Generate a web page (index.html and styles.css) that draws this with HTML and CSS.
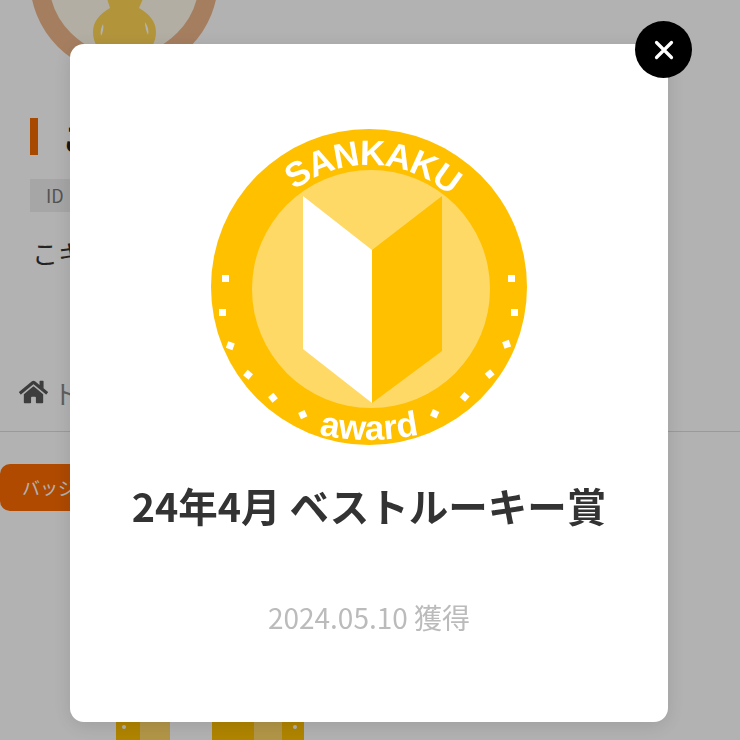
FILE: index.html
```html
<!DOCTYPE html>
<html lang="ja">
<head>
  <meta charset="UTF-8">
  <title>Badge</title>
  <link rel="stylesheet" href="styles.css">
</head>
<body>

<div class="page">
  <svg class="avatar" width="188" height="188" viewBox="0 0 188 188">
    <circle cx="94" cy="94" r="84.5" fill="#fffaea" stroke="#edb589" stroke-width="19"/>
    <path d="M75 106L80 122C70 128 63 135 63 146C63 155 68 165 75 172H114C121 165 126 155 126 146C126 135 119 128 109 122L116 106Z" fill="#ffd555"/>
    <path d="M73 138C71 142 70 146 71 150C73 146 74 142 73 138Z" fill="#fff"/>
    <path d="M115 136C118 140 119 145 118 149C116 145 115 140 115 136Z" fill="#fff"/>
  </svg>

  <div class="title-row">
    <span class="title-bar"></span>
    <h1>こんにちは</h1>
  </div>
  <div class="id-tag">ID</div>
  <p class="intro">こキャラ</p>

  <nav class="crumbs">
    <svg class="home-icon" viewBox="0 0 576 512" width="29" height="26">
      <path d="M280.37 148.26L96 300.11V464a16 16 0 0 0 16 16l112.06-.29a16 16 0 0 0 15.92-16V368a16 16 0 0 1 16-16h64a16 16 0 0 1 16 16v95.64a16 16 0 0 0 16 16.05L464 480a16 16 0 0 0 16-16V300L295.67 148.26a12.19 12.19 0 0 0-15.3 0zM571.6 251.47L488 182.56V44.05a12 12 0 0 0-12-12h-56a12 12 0 0 0-12 12v72.61L318.47 43a48 48 0 0 0-61 0L4.34 251.47a12 12 0 0 0-1.6 16.9l25.5 31A12 12 0 0 0 45.15 301l235.22-193.74a12.19 12.19 0 0 1 15.3 0L530.9 301a12 12 0 0 0 16.9-1.6l25.5-31a12 12 0 0 0-1.7-16.93z"/>
    </svg>
    <span>トップ</span>
  </nav>

  <div class="tabs">
    <a class="tab-active">バッジ一覧</a>
  </div>

  <div class="ribbons">
    <div class="ribbon ribbon-a">
      <span class="strip-dark"><i class="pin"></i></span>
      <span class="strip-light"></span>
    </div>
    <div class="ribbon ribbon-b">
      <span class="strip-dark strip-wide"></span>
      <span class="strip-light strip-mid"></span>
      <span class="strip-dark"><i class="pin"></i></span>
    </div>
  </div>
</div>

<div class="overlay"></div>

<div class="modal">
  <button class="close-button" aria-label="close">
    <svg viewBox="0 0 20 20" width="20" height="20">
      <path d="M2.5 2.5L17.5 17.5M17.5 2.5L2.5 17.5" stroke="#fff" stroke-width="3.2" stroke-linecap="round"/>
    </svg>
  </button>

  <svg class="badge" width="340" height="340" viewBox="200 120 340 340">
    <defs>
      <path id="arc-top" d="M247 287a122 122 0 0 1 244 0"/>
      <path id="arc-bottom" d="M269 418A240 240 0 0 0 469 418"/>
    </defs>
    <circle cx="369" cy="287" r="158" fill="#ffc000"/>
    <circle cx="371" cy="289" r="119" fill="#ffd966"/>
    <polygon points="303,196 372,250 372,403 303,349" fill="#fff"/>
    <polygon points="442,196 372,250 372,403 442,351" fill="#ffc000"/>
    <text class="badge-top"><textPath href="#arc-top" startOffset="51%" text-anchor="middle">SANKAKU</textPath></text>
    <text class="badge-bottom"><textPath href="#arc-bottom" startOffset="50%" text-anchor="middle">award</textPath></text>
    <g fill="#fff">
      <rect x="222" y="275" width="7" height="7"/>
      <rect x="219" y="309" width="7" height="7"/>
      <rect x="227" y="342" width="7" height="7" transform="rotate(20 230 345)"/>
      <rect x="245" y="371" width="7" height="7" transform="rotate(40 248 374)"/>
      <rect x="270" y="394" width="7" height="7" transform="rotate(50 273 397)"/>
      <rect x="300" y="411" width="7" height="7" transform="rotate(65 303 414)"/>
      <rect x="508" y="275" width="7" height="7"/>
      <rect x="511" y="309" width="7" height="7"/>
      <rect x="503" y="341" width="7" height="7" transform="rotate(-20 506 344)"/>
      <rect x="486" y="371" width="7" height="7" transform="rotate(-40 489 374)"/>
      <rect x="461" y="394" width="7" height="7" transform="rotate(-50 464 397)"/>
      <rect x="431" y="411" width="7" height="7" transform="rotate(-65 434 414)"/>
    </g>
  </svg>

  <h2 class="badge-name">24年4月 ベストルーキー賞</h2>
  <p class="badge-date">2024.05.10 獲得</p>
</div>

</body>
</html>
```

FILE: styles.css
```css
html, body {
  height: 740px;
  overflow: hidden;
}

body {
  margin: 0;
  background-color: #fff;
  font-family: "Noto Sans CJK JP", "Noto Sans", sans-serif;
}

.page {
  margin-top: -114px;
}

.avatar {
  display: block;
  margin-left: 30px;
}

.title-row {
  display: flex;
  align-items: center;
  gap: 24px;
  margin: 44px 0 0 30px;
  height: 37px;
}

.title-bar {
  width: 8px;
  height: 37px;
  background-color: #f06a00;
}

.title-row h1 {
  margin: 0;
  font-size: 32px;
  color: #222;
  white-space: nowrap;
}

.id-tag {
  width: 120px;
  height: 33px;
  margin: 24px 0 0 30px;
  padding-left: 16px;
  background-color: #eee;
  color: #777;
  font-size: 18px;
  line-height: 33px;
}

.intro {
  margin: 22px 0 0 32px;
  font-size: 26px;
  line-height: 38px;
  color: #333;
}

.crumbs {
  display: flex;
  align-items: center;
  gap: 5px;
  height: 34px;
  margin-top: 103px;
  padding: 0 0 22px 19px;
  color: #888;
  font-size: 26px;
  border-bottom: 1px solid #ddd;
}

.home-icon {
  fill: #585858;
}

.tabs {
  margin-top: 32px;
}

.tab-active {
  display: block;
  width: 200px;
  height: 47px;
  padding-left: 22px;
  border-radius: 10px;
  background-color: #fb6a00;
  color: #fff;
  font-size: 18px;
  line-height: 47px;
}

.ribbons {
  display: flex;
  gap: 42px;
  margin: 190px 0 0 116px;
}

.ribbon {
  display: flex;
  height: 39px;
}

.ribbon span {
  display: block;
  position: relative;
  width: 22px;
}

.strip-dark {
  background-color: #fcbe00;
}

.strip-light {
  background-color: #ffd766;
}

.ribbon-a span.strip-dark {
  width: 24px;
}

.ribbon-a span.strip-light {
  width: 30px;
}

.ribbon span.strip-wide {
  width: 42px;
}

.ribbon span.strip-mid {
  width: 28px;
}

.pin {
  position: absolute;
  top: 24px;
  left: 6px;
  width: 4px;
  height: 4px;
  border-radius: 50%;
  background-color: #fff;
}

.ribbon-b .pin {
  left: 11px;
}

.overlay {
  position: fixed;
  inset: 0;
  background-color: rgba(0, 0, 0, 0.3);
}

.modal {
  position: fixed;
  left: 70px;
  top: 44px;
  width: 598px;
  height: 678px;
  border-radius: 14px;
  background-color: #fff;
  box-shadow: 0 4px 20px rgba(0, 0, 0, 0.12);
  display: flex;
  flex-direction: column;
  align-items: center;
}

.close-button {
  position: absolute;
  top: -23px;
  right: -24px;
  display: flex;
  align-items: center;
  justify-content: center;
  width: 57px;
  height: 57px;
  padding: 0;
  border: none;
  border-radius: 50%;
  background-color: #000;
}

.badge {
  display: block;
  margin: 76px 0 0 2px;
  flex-shrink: 0;
}

.badge-top,
.badge-bottom {
  font-family: "Liberation Sans", sans-serif;
  font-weight: bold;
  fill: #fff;
}

.badge-top {
  font-size: 35px;
  letter-spacing: -1px;
}

.badge-bottom {
  font-size: 35px;
}

.badge-name {
  margin: 20px 0 0;
  font-size: 39.5px;
  line-height: 50px;
  font-weight: bold;
  color: #333;
  white-space: nowrap;
}

.badge-date {
  margin: 67px 0 0;
  font-size: 28px;
  line-height: 40px;
  color: #bbb;
}
```
